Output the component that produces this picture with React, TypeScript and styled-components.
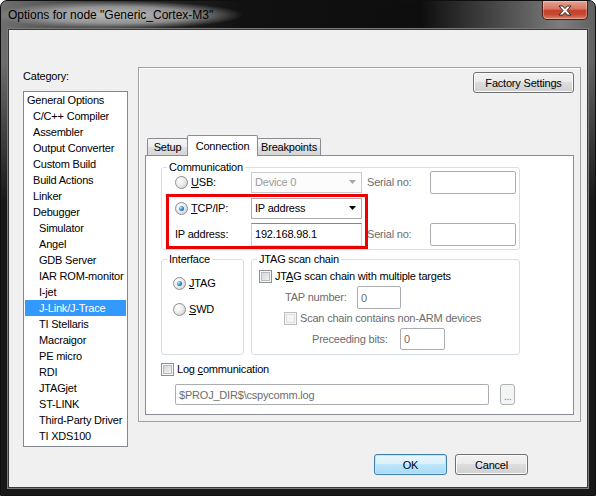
import React from "react";
import styled, { createGlobalStyle, css } from "styled-components";

const categories = [
  { label: "General Options", level: 0 },
  { label: "C/C++ Compiler", level: 1 },
  { label: "Assembler", level: 1 },
  { label: "Output Converter", level: 1 },
  { label: "Custom Build", level: 1 },
  { label: "Build Actions", level: 1 },
  { label: "Linker", level: 1 },
  { label: "Debugger", level: 1 },
  { label: "Simulator", level: 2 },
  { label: "Angel", level: 2 },
  { label: "GDB Server", level: 2 },
  { label: "IAR ROM-monitor", level: 2 },
  { label: "I-jet", level: 2 },
  { label: "J-Link/J-Trace", level: 2, selected: true },
  { label: "TI Stellaris", level: 2 },
  { label: "Macraigor", level: 2 },
  { label: "PE micro", level: 2 },
  { label: "RDI", level: 2 },
  { label: "JTAGjet", level: 2 },
  { label: "ST-LINK", level: 2 },
  { label: "Third-Party Driver", level: 2 },
  { label: "TI XDS100", level: 2 },
];

const GlobalStyle = createGlobalStyle`
  html, body {
    margin: 0;
    padding: 0;
    background: #ffffff;
  }
  body {
    font-family: "Liberation Sans", Arial, sans-serif;
    font-size: 11px;
    letter-spacing: -0.2px;
    color: #000;
  }
  * {
    box-sizing: border-box;
  }
`;

const Window = styled.div`
  width: 596px;
  height: 496px;
  display: flex;
  flex-direction: column;
  border: 1px solid #101010;
  border-radius: 7px 7px 0 0;
  overflow: hidden;
  background:
    linear-gradient(to bottom, rgba(24, 24, 24, 0) 0px, rgba(24, 24, 24, 0) 60px, rgba(24, 24, 24, 1) 200px),
    linear-gradient(
      to right,
      #6f6f6f 0px,
      #2c2c2c 130px,
      #111111 240px,
      #0e0e0e 420px,
      #5b5b5b 520px,
      #7d7d7d 560px,
      #5e5e5e 596px
    );
`;

const TitleBar = styled.div`
  height: 28px;
  flex: none;
  display: flex;
  justify-content: space-between;
  align-items: flex-start;
`;

const TitleText = styled.div`
  padding: 6px 30px 6px 7px;
  font-family: "Liberation Sans", Arial, sans-serif;
  font-size: 12px;
  letter-spacing: 0;
  line-height: 16px;
  color: #000;
  background: radial-gradient(
    farthest-side at 48% 50%,
    rgba(195, 195, 195, 0.95) 0%,
    rgba(168, 168, 168, 0.8) 60%,
    rgba(140, 140, 140, 0) 100%
  );
`;

const CloseButton = styled.div`
  width: 46px;
  height: 19px;
  margin-right: 7px;
  display: flex;
  align-items: center;
  justify-content: center;
  border: 1px solid #4e1a13;
  border-top: none;
  border-radius: 0 0 5px 5px;
  background: linear-gradient(#e6a495 0%, #d7735f 45%, #c4412a 52%, #c44a33 75%, #dc8466 100%);
  box-shadow: inset 0 0 0 1px rgba(255, 255, 255, 0.3);
`;

const Client = styled.div`
  flex: 1;
  margin: 0 7px 7px;
  display: flex;
  flex-direction: column;
  padding: 37px 6px 0 14px;
  background: #f0f0f0;
  border: 1px solid #3a3a3a;
  box-shadow: 0 0 0 1px #7a7a7a;
`;

const MainRow = styled.div`
  display: flex;
  align-items: flex-start;
  gap: 10px;
`;

const CategoryColumn = styled.div`
  width: 105px;
  display: flex;
  flex-direction: column;
`;

const CategoryLabel = styled.div`
  margin-top: 2px;
  line-height: 14px;
`;

const ListBox = styled.div`
  margin-top: 8px;
  height: 356px;
  background: #ffffff;
  border: 1px solid #828790;
  display: flex;
  flex-direction: column;
`;

const ListItem = styled.div<{ $level: number; $selected?: boolean }>`
  height: 16px;
  line-height: 16px;
  margin: 0 1px;
  padding-left: ${(p) => 2 + p.$level * 6}px;
  white-space: nowrap;
  ${(p) =>
    p.$selected &&
    css`
      background: #3399ff;
      color: #ffffff;
    `}
`;

const OptionsFrame = styled.div`
  width: 443px;
  height: 355px;
  display: flex;
  flex-direction: column;
  padding: 4px 6px 6px;
  border: 1px solid #a0a0a0;
  box-shadow: inset 1px 1px 0 #ffffff;
`;

const FactoryRow = styled.div`
  display: flex;
  justify-content: flex-end;
`;

const PushButton = styled.div<{ $w: number; $default?: boolean }>`
  width: ${(p) => p.$w}px;
  height: 21px;
  display: flex;
  align-items: center;
  justify-content: center;
  border-radius: 3px;
  border: 1px solid ${(p) => (p.$default ? "#3c7fb1" : "#707070")};
  background: ${(p) =>
    p.$default
      ? "linear-gradient(#eaf6fd 0%, #d9f0fc 49%, #bee6fd 50%, #a7d9f5 100%)"
      : "linear-gradient(#f2f2f2 0%, #ebebeb 49%, #dddddd 50%, #cfcfcf 100%)"};
  box-shadow: inset 0 0 0 1px ${(p) => (p.$default ? "#c2e6f8" : "#fbfbfb")};
`;

const TabStrip = styled.div`
  margin-top: 42px;
  height: 20px;
  display: flex;
  align-items: flex-end;
  padding-left: 2px;
`;

const Tab = styled.div<{ $w: number; $active?: boolean; $first?: boolean }>`
  position: relative;
  z-index: ${(p) => (p.$active ? 2 : 1)};
  width: ${(p) => p.$w}px;
  height: ${(p) => (p.$active ? 21 : 17)}px;
  margin-left: ${(p) => (p.$first ? 0 : -1)}px;
  margin-bottom: ${(p) => (p.$active ? -1 : 0)}px;
  display: flex;
  align-items: center;
  justify-content: center;
  border: 1px solid #898c95;
  border-bottom: none;
  border-radius: 2px 2px 0 0;
  background: ${(p) =>
    p.$active ? "#ffffff" : "linear-gradient(#f4f4f4 0%, #ececec 50%, #e0e0e0 50%, #d6d6d6 100%)"};
`;

const TabPanel = styled.div`
  position: relative;
  width: 429px;
  height: 261px;
  display: flex;
  flex-direction: column;
  padding-left: 15px;
  background: #ffffff;
  border: 1px solid #898c95;
`;

const Group = styled.fieldset<{ $w: number; $h: number; $top: number }>`
  width: ${(p) => p.$w}px;
  height: ${(p) => p.$h}px;
  margin: ${(p) => p.$top}px 0 0;
  padding: 0;
  min-inline-size: 0;
  border: 1px solid #d5dfe5;
  border-radius: 3px;
  display: flex;
  flex-direction: column;
`;

const GroupLabel = styled.legend`
  margin-left: 5px;
  padding: 0 2px;
  line-height: 12px;
`;

const GroupsRow = styled.div`
  display: flex;
  gap: 7px;
`;

const FieldRow = styled.div<{ $indent: number; $top: number; $h: number }>`
  display: flex;
  align-items: center;
  height: ${(p) => p.$h}px;
  margin-top: ${(p) => p.$top}px;
  padding-left: ${(p) => p.$indent}px;
`;

const Option = styled.div<{ $w?: number; $muted?: boolean }>`
  display: flex;
  align-items: center;
  gap: 3px;
  flex: none;
  width: ${(p) => (p.$w ? `${p.$w}px` : "auto")};
  line-height: 13px;
  color: ${(p) => (p.$muted ? "#6d6d6d" : "#000")};
  white-space: nowrap;
`;

const FieldLabel = styled.span<{ $w: number; $muted?: boolean }>`
  flex: none;
  width: ${(p) => p.$w}px;
  line-height: 13px;
  color: ${(p) => (p.$muted ? "#6d6d6d" : "#000")};
  white-space: nowrap;
`;

const SerialLabel = styled(FieldLabel)`
  margin-left: 5px;
`;

const RadioMark = styled.span<{ $checked?: boolean }>`
  position: relative;
  flex: none;
  width: 13px;
  height: 13px;
  border-radius: 50%;
  border: 1px solid #8e8f8f;
  background: radial-gradient(circle at 35% 35%, #ffffff 0%, #ececec 45%, #c6c6c6 100%);
  ${(p) =>
    p.$checked &&
    css`
      &::after {
        content: "";
        position: absolute;
        left: 3px;
        top: 3px;
        width: 5px;
        height: 5px;
        border-radius: 50%;
        background: radial-gradient(circle at 35% 35%, #b9ecff 0%, #3797d8 45%, #0c3a66 100%);
      }
    `}
`;

const CheckMark = styled.span<{ $disabled?: boolean }>`
  flex: none;
  width: 13px;
  height: 13px;
  border: 1px solid ${(p) => (p.$disabled ? "#bcbcbc" : "#8e8f8f")};
  background: ${(p) =>
    p.$disabled ? "#f4f4f4" : "linear-gradient(135deg, #cbcfd5 0%, #e4e6e9 55%, #f8f8f8 100%)"};
  box-shadow: inset 0 0 0 1px #f6f6f6, inset 0 0 0 2px ${(p) => (p.$disabled ? "#e0e0e0" : "#b8bcc2")};
`;

const Combo = styled.div<{ $disabled?: boolean }>`
  flex: none;
  width: 111px;
  height: 21px;
  display: flex;
  align-items: center;
  justify-content: space-between;
  padding: 0 5px 0 3px;
  border: 1px solid ${(p) => (p.$disabled ? "#c9cdd1" : "#acacac")};
  background: ${(p) => (p.$disabled ? "#fcfcfc" : "#ffffff")};
  color: ${(p) => (p.$disabled ? "#9b9b9b" : "#000")};
`;

const Edit = styled.div<{ $w: number; $h: number; $focus?: boolean; $muted?: boolean }>`
  flex: none;
  width: ${(p) => p.$w}px;
  height: ${(p) => p.$h}px;
  display: flex;
  align-items: center;
  padding: 0 3px;
  border: 1px solid #abadb3;
  border-radius: 2px;
  background: #ffffff;
  color: ${(p) => (p.$muted ? "#6d6d6d" : "#000")};
  white-space: nowrap;
  ${(p) =>
    p.$focus &&
    css`
      border-color: #5794bf #b7d5ea #c7e2f1 #b7d5ea;
      border-radius: 0;
    `}
`;

const PathRow = styled.div`
  display: flex;
  align-items: center;
  gap: 11px;
  height: 21px;
  margin-top: 7px;
  padding-left: 14px;
`;

const BrowseButton = styled.div`
  width: 15px;
  height: 21px;
  display: flex;
  align-items: center;
  justify-content: center;
  padding-top: 3px;
  border: 1px solid #adb2b5;
  border-radius: 3px;
  background: #f4f4f4;
  color: #838383;
  letter-spacing: -0.5px;
`;

const Annotation = styled.div`
  position: absolute;
  left: 20px;
  top: 38px;
  width: 202px;
  height: 55px;
  border: 3px solid #ee0000;
  pointer-events: none;
`;

const ButtonRow = styled.div`
  margin-top: 7px;
  display: flex;
  justify-content: flex-end;
  gap: 8px;
  padding-right: 53px;
`;

const ComboArrow = ({ color }: { color: string }) => (
  <svg width="7" height="4" viewBox="0 0 7 4">
    <path d="M0 0H7L3.5 4Z" fill={color} />
  </svg>
);

const CloseGlyph = () => (
  <svg width="14" height="11" viewBox="0 0 14 11">
    <path
      d="M1 1H4.8L7 3.6L9.2 1H13L9 5.5L13 10H9.2L7 7.4L4.8 10H1L5 5.5Z"
      fill="#ffffff"
      stroke="#3b2420"
      strokeWidth="1"
      strokeLinejoin="round"
    />
  </svg>
);

export default function App() {
  return (
    <>
      <GlobalStyle />
      <Window>
        <TitleBar>
          <TitleText>Options for node "Generic_Cortex-M3"</TitleText>
          <CloseButton>
            <CloseGlyph />
          </CloseButton>
        </TitleBar>
        <Client>
          <MainRow>
            <CategoryColumn>
              <CategoryLabel>Category:</CategoryLabel>
              <ListBox>
                {categories.map((c) => (
                  <ListItem key={c.label} $level={c.level} $selected={c.selected}>
                    {c.label}
                  </ListItem>
                ))}
              </ListBox>
            </CategoryColumn>

            <OptionsFrame>
              <FactoryRow>
                <PushButton $w={101}>Factory Settings</PushButton>
              </FactoryRow>
              <TabStrip>
                <Tab $w={41} $first>
                  Setup
                </Tab>
                <Tab $w={71} $active>
                  Connection
                </Tab>
                <Tab $w={64}>Breakpoints</Tab>
              </TabStrip>
              <TabPanel>
                <Group $w={359} $h={89} $top={5}>
                  <GroupLabel>Communication</GroupLabel>
                  <FieldRow $indent={13} $top={-2} $h={22}>
                    <Option $w={76}>
                      <RadioMark />
                      <span>
                        <u>U</u>SB:
                      </span>
                    </Option>
                    <Combo $disabled>
                      Device 0
                      <ComboArrow color="#a7a7a7" />
                    </Combo>
                    <SerialLabel $w={63} $muted>
                      Serial no:
                    </SerialLabel>
                    <Edit $w={86} $h={23} />
                  </FieldRow>
                  <FieldRow $indent={13} $top={4} $h={22}>
                    <Option $w={76}>
                      <RadioMark $checked />
                      <span>
                        <u>T</u>CP/IP:
                      </span>
                    </Option>
                    <Combo>
                      IP address
                      <ComboArrow color="#000000" />
                    </Combo>
                  </FieldRow>
                  <FieldRow $indent={13} $top={3} $h={24}>
                    <FieldLabel $w={76}>IP address:</FieldLabel>
                    <Edit $w={111} $h={23} $focus>
                      192.168.98.1
                    </Edit>
                    <SerialLabel $w={63} $muted>
                      Serial no:
                    </SerialLabel>
                    <Edit $w={86} $h={23} />
                  </FieldRow>
                </Group>

                <GroupsRow>
                  <Group $w={83} $h={102} $top={3}>
                    <GroupLabel>Interface</GroupLabel>
                    <FieldRow $indent={11} $top={10} $h={16}>
                      <Option>
                        <RadioMark $checked />
                        <span>
                          <u>J</u>TAG
                        </span>
                      </Option>
                    </FieldRow>
                    <FieldRow $indent={11} $top={10} $h={16}>
                      <Option>
                        <RadioMark />
                        <span>
                          <u>S</u>WD
                        </span>
                      </Option>
                    </FieldRow>
                  </Group>

                  <Group $w={269} $h={102} $top={3}>
                    <GroupLabel>JTAG scan chain</GroupLabel>
                    <FieldRow $indent={7} $top={3} $h={16}>
                      <Option>
                        <CheckMark />
                        <span>
                          JT<u>A</u>G scan chain with multiple targets
                        </span>
                      </Option>
                    </FieldRow>
                    <FieldRow $indent={33} $top={2} $h={23}>
                      <FieldLabel $w={72} $muted>
                        TAP number:
                      </FieldLabel>
                      <Edit $w={44} $h={23} $muted>
                        0
                      </Edit>
                    </FieldRow>
                    <FieldRow $indent={32} $top={1} $h={16}>
                      <Option $muted>
                        <CheckMark $disabled />
                        <span>Scan chain contains non-ARM devices</span>
                      </Option>
                    </FieldRow>
                    <FieldRow $indent={60} $top={2} $h={22}>
                      <FieldLabel $w={88} $muted>
                        Preceeding bits:
                      </FieldLabel>
                      <Edit $w={45} $h={22} $muted>
                        0
                      </Edit>
                    </FieldRow>
                  </Group>
                </GroupsRow>

                <FieldRow $indent={0} $top={6} $h={16}>
                  <Option>
                    <CheckMark />
                    <span>
                      Log <u>c</u>ommunication
                    </span>
                  </Option>
                </FieldRow>
                <PathRow>
                  <Edit $w={314} $h={21} $muted>
                    $PROJ_DIR$\cspycomm.log
                  </Edit>
                  <BrowseButton>...</BrowseButton>
                </PathRow>

                <Annotation />
              </TabPanel>
            </OptionsFrame>
          </MainRow>

          <ButtonRow>
            <PushButton $w={73} $default>
              OK
            </PushButton>
            <PushButton $w={73}>Cancel</PushButton>
          </ButtonRow>
        </Client>
      </Window>
    </>
  );
}
